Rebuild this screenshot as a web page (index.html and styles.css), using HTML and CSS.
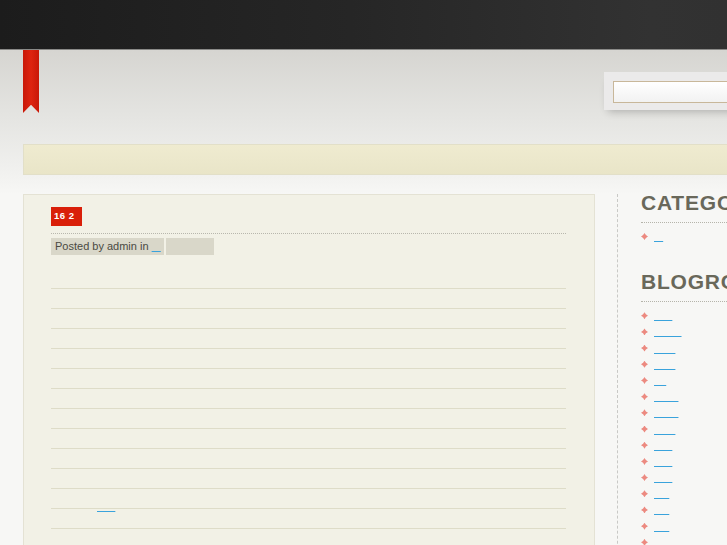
FILE: index.html
```html
<!DOCTYPE html>
<html>
<head>
<meta charset="utf-8">
<link rel="stylesheet" href="styles.css">
</head>
<body>
<div class="topbar"></div>
<div class="header">
  <div class="header-row">
    <div class="ribbon"></div>
    <div class="search"><input class="search-input" type="text"></div>
  </div>
  <div class="navbar"></div>
</div>
<div class="main">
  <div class="content">
    <div class="date">16 2</div>
    <div class="meta-line"></div>
    <div class="meta">
      <span class="posted">Posted by admin in <a href="#">&nbsp;&nbsp;&nbsp;</a></span>
      <span class="tags"></span>
    </div>
    <div class="body">
      <div class="rule"></div>
      <div class="rule"></div>
      <div class="rule"></div>
      <div class="rule"></div>
      <div class="rule"></div>
      <div class="rule"></div>
      <div class="rule"></div>
      <div class="rule"></div>
      <div class="rule"></div>
      <div class="rule"></div>
      <div class="rule"></div>
      <div class="rule"></div>
      <div class="rule rule-link"><a class="more" href="#">&nbsp;&nbsp;&nbsp;&nbsp;&nbsp;&nbsp;</a></div>
    </div>
  </div>
  <div class="sidebar">
    <h2 class="widget-title">CATEGORIES</h2>
    <ul class="list">
      <li><a href="#">&nbsp;&nbsp;&nbsp;</a></li>
    </ul>
    <h2 class="widget-title">BLOGROLL</h2>
    <ul class="list">
      <li><a href="#">&nbsp;&nbsp;&nbsp;&nbsp;&nbsp;&nbsp;</a></li>
      <li><a href="#">&nbsp;&nbsp;&nbsp;&nbsp;&nbsp;&nbsp;&nbsp;&nbsp;&nbsp;</a></li>
      <li><a href="#">&nbsp;&nbsp;&nbsp;&nbsp;&nbsp;&nbsp;&nbsp;</a></li>
      <li><a href="#">&nbsp;&nbsp;&nbsp;&nbsp;&nbsp;&nbsp;&nbsp;</a></li>
      <li><a href="#">&nbsp;&nbsp;&nbsp;&nbsp;</a></li>
      <li><a href="#">&nbsp;&nbsp;&nbsp;&nbsp;&nbsp;&nbsp;&nbsp;&nbsp;</a></li>
      <li><a href="#">&nbsp;&nbsp;&nbsp;&nbsp;&nbsp;&nbsp;&nbsp;&nbsp;</a></li>
      <li><a href="#">&nbsp;&nbsp;&nbsp;&nbsp;&nbsp;&nbsp;&nbsp;</a></li>
      <li><a href="#">&nbsp;&nbsp;&nbsp;&nbsp;&nbsp;&nbsp;</a></li>
      <li><a href="#">&nbsp;&nbsp;&nbsp;&nbsp;&nbsp;&nbsp;</a></li>
      <li><a href="#">&nbsp;&nbsp;&nbsp;&nbsp;&nbsp;&nbsp;</a></li>
      <li><a href="#">&nbsp;&nbsp;&nbsp;&nbsp;&nbsp;</a></li>
      <li><a href="#">&nbsp;&nbsp;&nbsp;&nbsp;&nbsp;</a></li>
      <li><a href="#">&nbsp;&nbsp;&nbsp;&nbsp;&nbsp;</a></li>
      <li><a href="#">&nbsp;&nbsp;&nbsp;&nbsp;&nbsp;</a></li>
    </ul>
  </div>
</div>
</body>
</html>
```

FILE: styles.css
```css
html, body {
  margin: 0;
  padding: 0;
}
body {
  width: 727px;
  height: 545px;
  overflow: hidden;
  background: #f7f7f5;
  font-family: "Liberation Sans", Arial, sans-serif;
}
.topbar {
  width: 1000px;
  height: 49px;
  background: linear-gradient(90deg, #1c1c1c 0%, #262626 35%, #323232 65%, #2f2f2f 88%, #1e1e1e 100%);
  border-bottom: 1px solid #8a8a88;
}
.header {
  width: 1000px;
  height: 144px;
  background: linear-gradient(180deg, #d6d5d1 0%, #e4e4e1 45%, #f1f1ef 85%, #f7f7f5 100%);
  display: flex;
  flex-direction: column;
}
.header-row {
  display: flex;
  align-items: flex-start;
  height: 94px;
  padding-left: 23px;
}
.ribbon {
  width: 16px;
  height: 63px;
  background: linear-gradient(90deg, #c81808, #de2410 50%, #c81808);
  clip-path: polygon(0 0, 100% 0, 100% 100%, 50% 87%, 0 100%);
}
.search {
  margin-left: 565px;
  margin-top: 22px;
  width: 300px;
  height: 38px;
  box-sizing: border-box;
  padding: 9px 0 0 9px;
  background: #ebeaea;
  box-shadow: 0 6px 8px -4px rgba(0, 0, 0, 0.22);
}
.search-input {
  display: block;
  margin: 0;
  width: 260px;
  height: 22px;
  box-sizing: border-box;
  border: 1px solid #c8b79a;
  background: linear-gradient(180deg, #ffffff, #f2f2f2);
  outline: none;
}
.navbar {
  margin-left: 23px;
  width: 977px;
  height: 31px;
  box-sizing: border-box;
  border: 1px solid #e2dfc8;
  background: linear-gradient(180deg, #efebd0, #e9e5c8);
}
.main {
  display: flex;
  align-items: flex-start;
  padding-left: 23px;
}
.content {
  flex: none;
  width: 572px;
  height: 400px;
  box-sizing: border-box;
  background: #f2f1e6;
  border: 1px solid #e4e2d4;
  padding: 12px 28px 0 27px;
}
.date {
  width: 31px;
  height: 19px;
  box-sizing: border-box;
  padding: 4px 0 0 3px;
  background: #d91f09;
  color: #fff;
  font-size: 9.5px;
  font-weight: bold;
  line-height: 10px;
  letter-spacing: 0.5px;
}
.meta-line {
  margin-top: 7px;
  border-top: 1px dotted #b8b7ad;
}
.meta {
  display: flex;
  gap: 2px;
  margin-top: 4px;
  height: 17px;
}
.posted {
  background: #d9d7c9;
  color: #4a4942;
  font-size: 11px;
  line-height: 17px;
  padding: 0 3px 0 4px;
}
.posted a {
  color: #3aa3dc;
}
.tags {
  width: 48px;
  background: #d9d7c9;
}
.body {
  padding-top: 14px;
}
.rule {
  height: 20px;
  border-bottom: 1px solid #dedcc8;
  box-sizing: border-box;
  font-size: 11px;
  line-height: 11px;
  padding-left: 46px;
}
.rule-link {
  display: flex;
  align-items: flex-start;
}
.more {
  line-height: 0;
  margin-top: -3px;
  color: #3aa3dc;
}
.sidebar {
  flex: none;
  margin-left: 22px;
  width: 300px;
  height: 400px;
  border-left: 1px dashed #c9c9c6;
  padding-left: 23px;
}
.widget-title {
  margin: 0;
  font-size: 21px;
  font-weight: bold;
  line-height: 18px;
  letter-spacing: 0.8px;
  color: #69685a;
  height: 28px;
  border-bottom: 1px dotted #b5b4aa;
}
.list {
  list-style: none;
  margin: 0;
  padding: 6px 0 28px 0;
}
.list li {
  position: relative;
  padding-left: 13px;
  height: 16.2px;
  font-size: 11px;
  line-height: 14px;
}
.list li::before {
  content: "";
  position: absolute;
  left: 0;
  top: 4px;
  width: 7px;
  height: 7px;
  background: #ec8a80;
  clip-path: polygon(50% 0, 70% 30%, 100% 50%, 70% 70%, 50% 100%, 30% 70%, 0 50%, 30% 30%);
}
.list a {
  color: #3aa3dc;
}
```
